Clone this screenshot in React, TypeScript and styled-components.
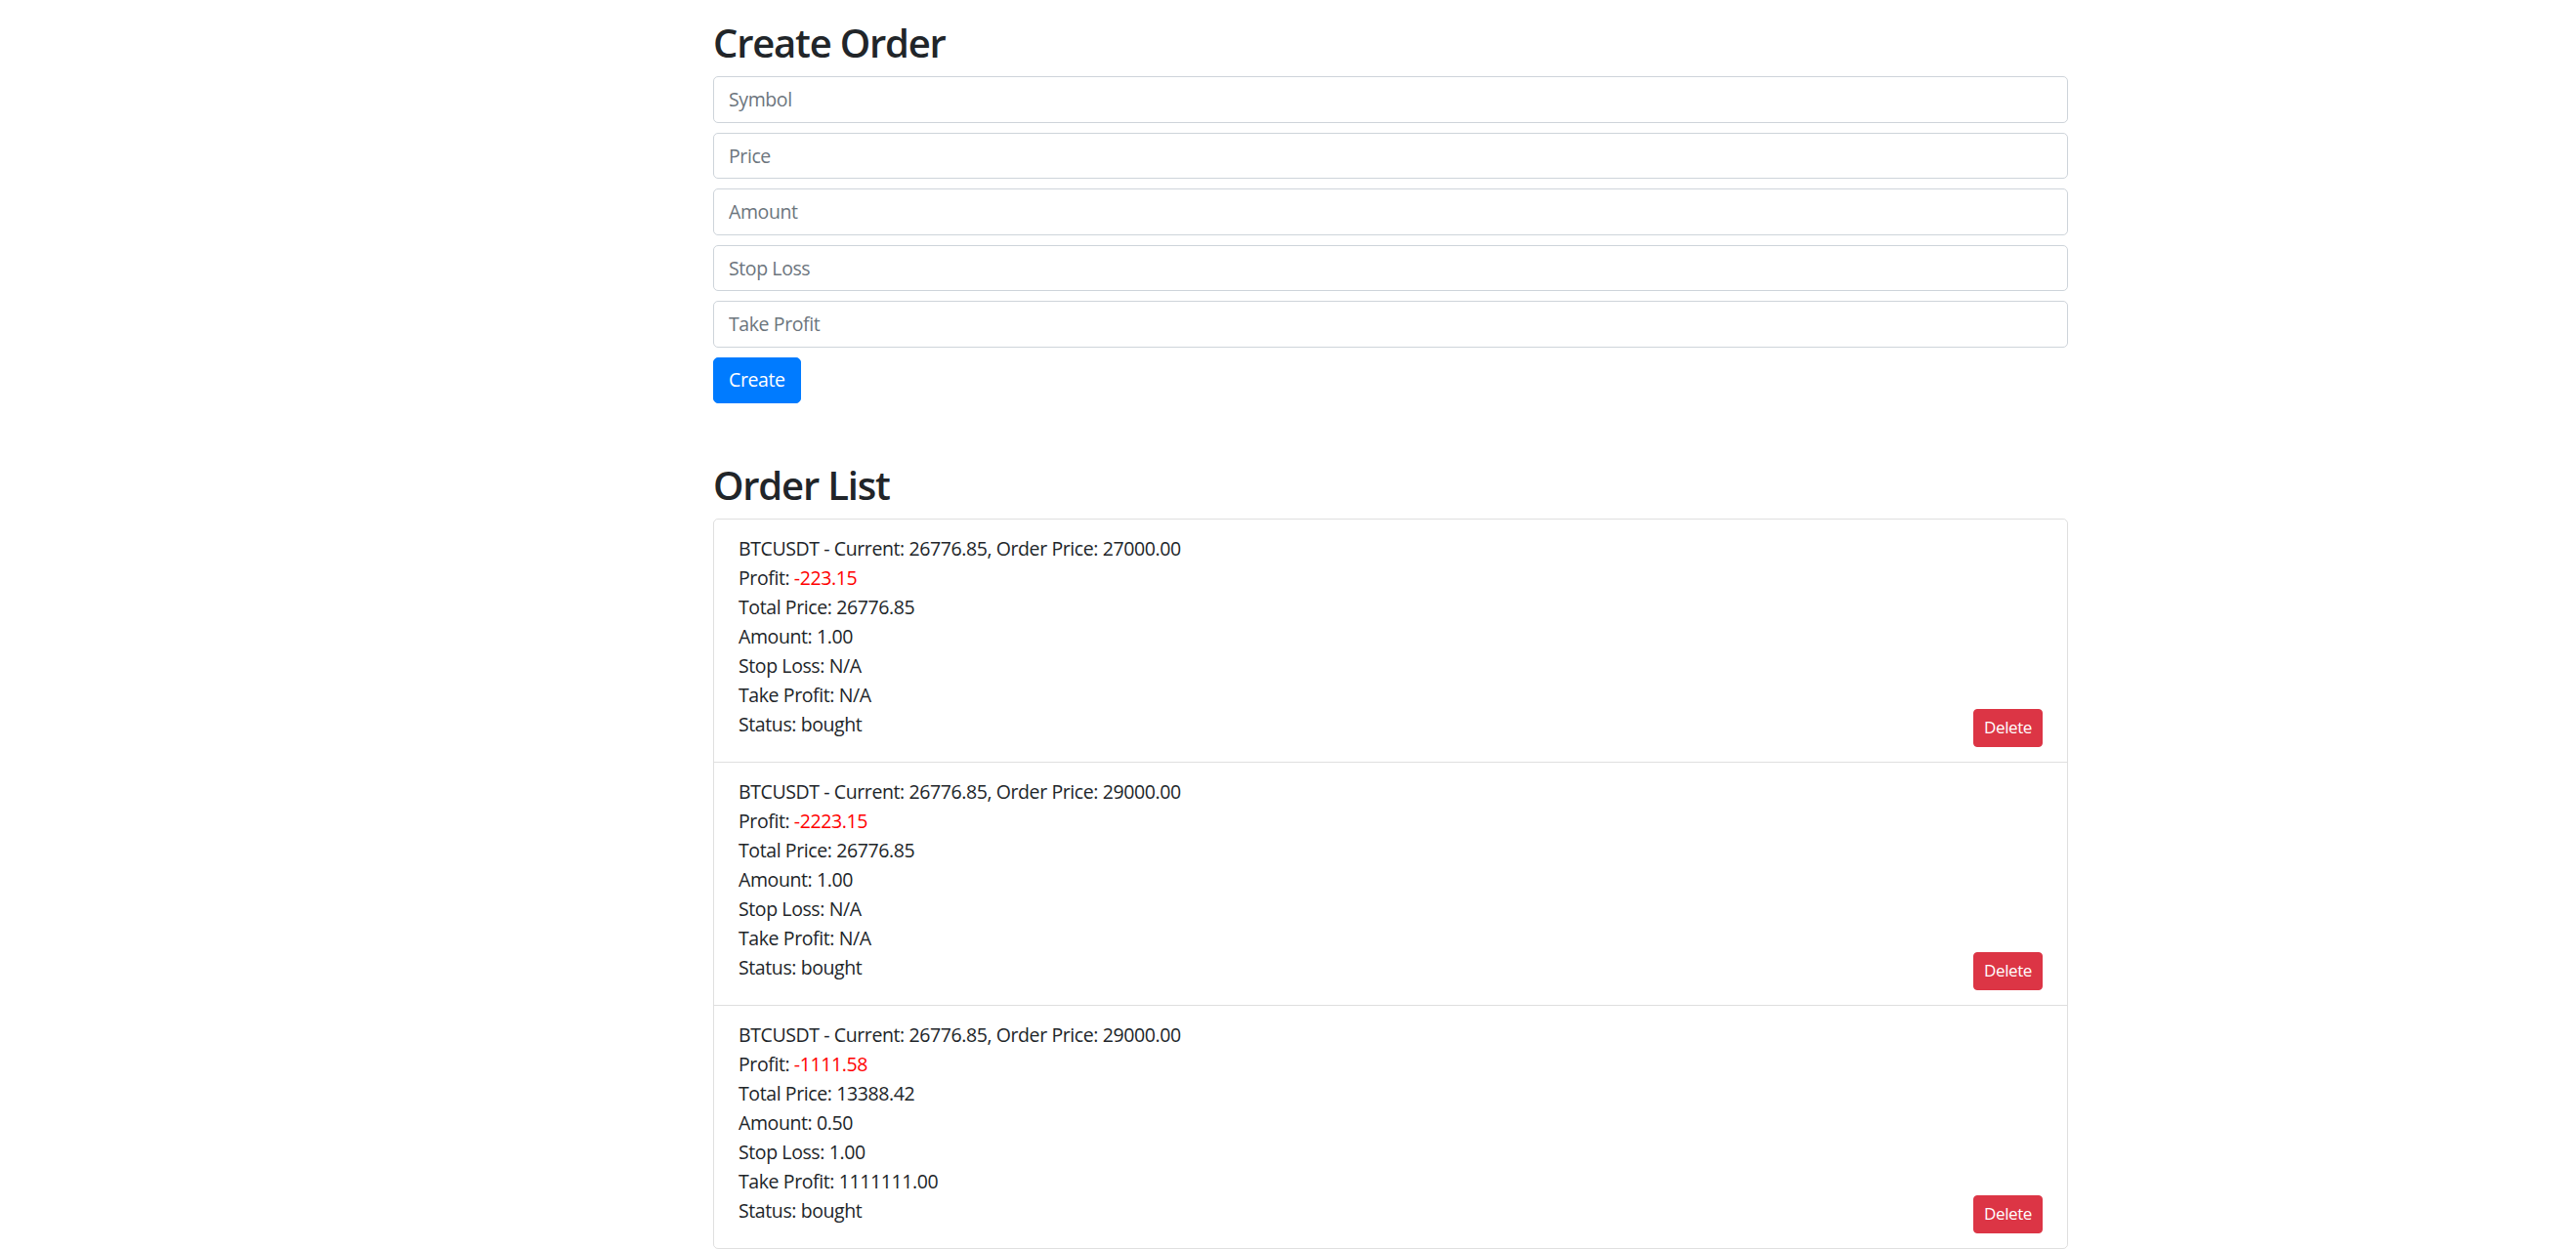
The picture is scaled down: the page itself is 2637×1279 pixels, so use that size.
import React from "react";
import styled, { createGlobalStyle } from "styled-components";

const GlobalStyle = createGlobalStyle`
  html, body {
    margin: 0;
    padding: 0;
    background: #ffffff;
  }
  body {
    font-family: "Open Sans", "Liberation Sans", sans-serif;
    font-size: 19.5px;
    line-height: 30px;
    letter-spacing: -0.4px;
    color: #212529;
  }
  * { box-sizing: border-box; }
`;

const Container = styled.main`
  width: 1387px;
  margin-left: 730px;
  padding-top: 20px;
`;

const Heading = styled.h2<{ $spaced?: boolean }>`
  font-size: 40px;
  line-height: 48px;
  font-weight: 600;
  letter-spacing: -1.2px;
  margin: ${(p) => (p.$spaced ? "60px" : "0")} 0 10px;
`;

const Form = styled.form`
  display: flex;
  flex-direction: column;
  align-items: flex-start;
`;

const Input = styled.input`
  display: block;
  width: 100%;
  height: 47.5px;
  margin: 0 0 10px;
  padding: 7.5px 15px;
  font: inherit;
  letter-spacing: inherit;
  color: #495057;
  background: #ffffff;
  border: 1px solid #ced4da;
  border-radius: 5px;
  outline: none;
  &::placeholder {
    color: #6c757d;
    opacity: 1;
  }
`;

const Button = styled.button<{ $variant: "primary" | "danger"; $small?: boolean }>`
  font-family: inherit;
  font-weight: 400;
  letter-spacing: -0.4px;
  color: #ffffff;
  background: ${(p) => (p.$variant === "primary" ? "#007bff" : "#dc3545")};
  border: 1px solid ${(p) => (p.$variant === "primary" ? "#007bff" : "#dc3545")};
  border-radius: ${(p) => (p.$small ? "4px" : "5px")};
  font-size: ${(p) => (p.$small ? "17px" : "19.5px")};
  line-height: ${(p) => (p.$small ? "26.25px" : "30px")};
  padding: ${(p) => (p.$small ? "5px 10px" : "7.5px 15px")};
  cursor: pointer;
  flex: none;
`;

const Card = styled.ul`
  list-style: none;
  margin: 0;
  padding: 0;
  border: 1px solid rgba(0, 0, 0, 0.125);
  border-radius: 5px;
`;

const Item = styled.li`
  display: flex;
  justify-content: space-between;
  align-items: flex-end;
  padding: 15px 25px;
  & + & {
    border-top: 1px solid rgba(0, 0, 0, 0.125);
  }
`;

const Details = styled.div`
  display: flex;
  flex-direction: column;
  padding-bottom: 8px;
`;

const Line = styled.div`
  line-height: 30px;
`;

const Loss = styled.span`
  color: #ff0000;
`;

type Order = {
  current: string;
  orderPrice: string;
  profit: string;
  total: string;
  amount: string;
  stopLoss: string;
  takeProfit: string;
  status: string;
};

const orders: Order[] = [
  { current: "26776.85", orderPrice: "27000.00", profit: "-223.15", total: "26776.85", amount: "1.00", stopLoss: "N/A", takeProfit: "N/A", status: "bought" },
  { current: "26776.85", orderPrice: "29000.00", profit: "-2223.15", total: "26776.85", amount: "1.00", stopLoss: "N/A", takeProfit: "N/A", status: "bought" },
  { current: "26776.85", orderPrice: "29000.00", profit: "-1111.58", total: "13388.42", amount: "0.50", stopLoss: "1.00", takeProfit: "1111111.00", status: "bought" },
];

export default function App() {
  return (
    <>
      <GlobalStyle />
      <Container>
        <Heading>Create Order</Heading>
        <Form onSubmit={(e) => e.preventDefault()}>
          <Input placeholder="Symbol" />
          <Input placeholder="Price" />
          <Input placeholder="Amount" />
          <Input placeholder="Stop Loss" />
          <Input placeholder="Take Profit" />
          <Button type="submit" $variant="primary">Create</Button>
        </Form>
        <Heading $spaced>Order List</Heading>
        <Card>
          {orders.map((o, i) => (
            <Item key={i}>
              <Details>
                <Line>BTCUSDT - Current: {o.current}, Order Price: {o.orderPrice}</Line>
                <Line>Profit: <Loss>{o.profit}</Loss></Line>
                <Line>Total Price: {o.total}</Line>
                <Line>Amount: {o.amount}</Line>
                <Line>Stop Loss: {o.stopLoss}</Line>
                <Line>Take Profit: {o.takeProfit}</Line>
                <Line>Status: {o.status}</Line>
              </Details>
              <Button type="button" $variant="danger" $small>Delete</Button>
            </Item>
          ))}
        </Card>
      </Container>
    </>
  );
}
